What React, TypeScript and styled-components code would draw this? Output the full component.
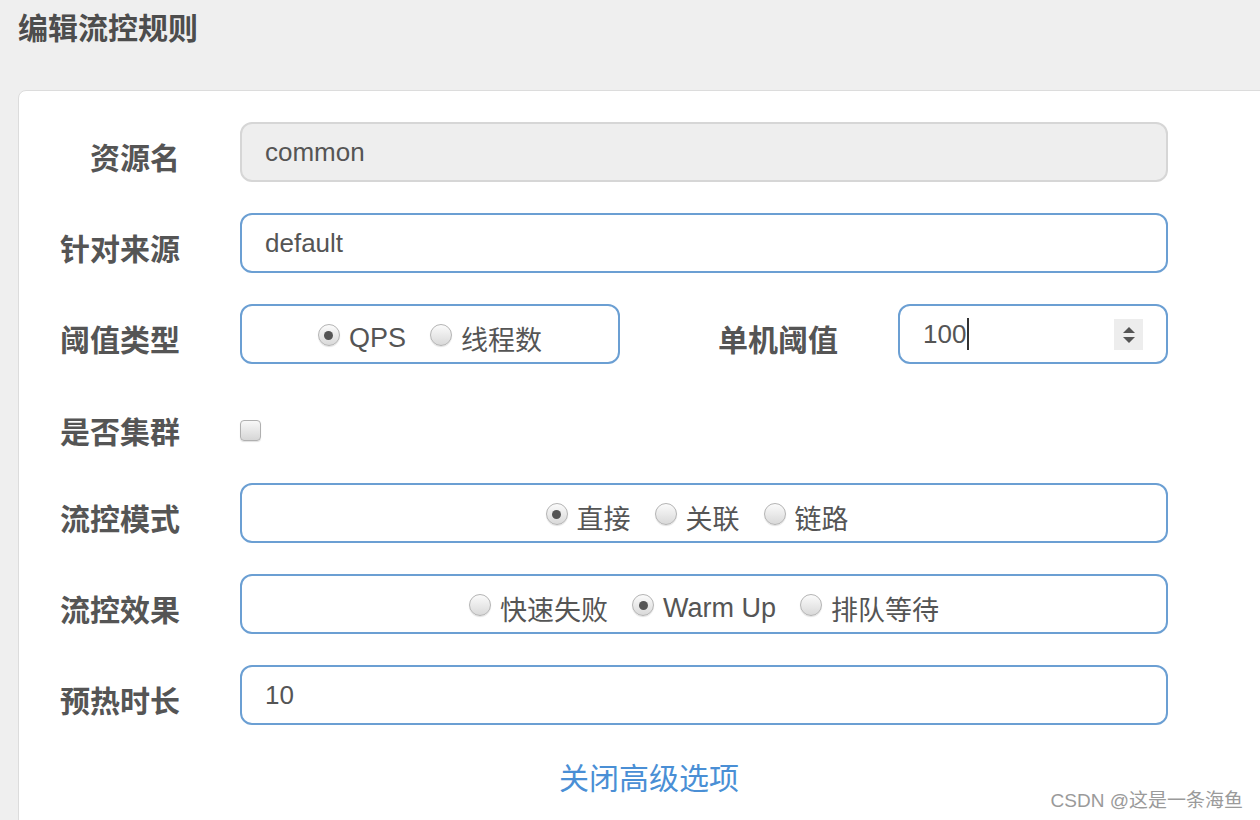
import React from "react";
import styled, { createGlobalStyle } from "styled-components";

const GlobalStyle = createGlobalStyle`
  html, body {
    margin: 0;
    padding: 0;
    background: #efefef;
    overflow: hidden;
  }
  body {
    width: 1260px;
    height: 820px;
    font-family: "Liberation Sans", "Noto Sans CJK SC", Arial, sans-serif;
  }
  * { box-sizing: border-box; }
`;

const Page = styled.div`
  position: relative;
  width: 1260px;
  height: 820px;
  padding-left: 18px;
  overflow: hidden;
`;

const Title = styled.h3`
  margin: 0;
  padding-top: 9px;
  height: 49px;
  line-height: 40px;
  font-size: 30px;
  font-weight: 700;
  color: #4d4d4d;
  font-family: "Liberation Sans", "Noto Sans CJK SC", sans-serif;
`;

const Card = styled.div`
  margin-top: 41px;
  width: 1262px;
  min-height: 760px;
  background: #ffffff;
  border: 1px solid #dcdcdc;
  border-radius: 8px;
  padding-top: 31px;
`;

const Form = styled.div`
  display: flex;
  flex-direction: column;
  gap: 31px;
`;

const Row = styled.div<{ $h?: number }>`
  display: flex;
  align-items: center;
  height: ${(p) => p.$h ?? 60}px;
`;

const Label = styled.label<{ $w?: number }>`
  flex: none;
  width: ${(p) => p.$w ?? 161}px;
  margin-right: 60px;
  text-align: right;
  padding-top: 7px;
  font-size: 30px;
  font-weight: 700;
  color: #555555;
  font-family: "Liberation Sans", "Noto Sans CJK SC", sans-serif;
`;

const Field = styled.div`
  display: flex;
  align-items: center;
  width: 928px;
  height: 100%;
`;

const Input = styled.div<{ $disabled?: boolean; $w?: number }>`
  position: relative;
  display: flex;
  align-items: center;
  width: ${(p) => (p.$w ? `${p.$w}px` : "100%")};
  height: 60px;
  padding-left: 23px;
  border: 2px solid ${(p) => (p.$disabled ? "#d6d6d6" : "#6b9fd3")};
  border-radius: 12px;
  background: ${(p) => (p.$disabled ? "#eeeeee" : "#ffffff")};
  font-size: 26px;
  color: #555555;
`;

const RadioBox = styled.div<{ $w?: number; $shift?: number }>`
  display: flex;
  align-items: center;
  justify-content: center;
  gap: 24px;
  width: ${(p) => (p.$w ? `${p.$w}px` : "100%")};
  height: 60px;
  padding-top: 8px;
  padding-right: ${(p) => p.$shift ?? 0}px;
  border: 2px solid #6b9fd3;
  border-radius: 12px;
  background: #ffffff;
`;

const RadioItem = styled.span`
  display: inline-flex;
  align-items: center;
  font-size: 27px;
  color: #555555;
  font-family: "Liberation Sans", "Noto Sans CJK SC", sans-serif;
`;

const RadioDot = styled.span<{ $checked?: boolean }>`
  position: relative;
  display: inline-block;
  width: 22px;
  height: 22px;
  margin-right: 9px;
  margin-top: -6px;
  border-radius: 50%;
  border: 1px solid #b4b4b4;
  background: linear-gradient(#fbfbfb, #d9d9d9);
  box-shadow: 0 1px 1px rgba(0, 0, 0, 0.12);
  &::after {
    content: "";
    display: ${(p) => (p.$checked ? "block" : "none")};
    position: absolute;
    left: 5.5px;
    top: 5.5px;
    width: 9px;
    height: 9px;
    border-radius: 50%;
    background: #555555;
  }
`;

const SideLabel = styled(Label)`
  flex: 1;
  width: auto;
  margin-right: 60px;
`;

const Caret = styled.span`
  display: inline-block;
  width: 2px;
  height: 32px;
  margin-left: 1px;
  background: #333333;
`;

const Spinner = styled.span`
  position: absolute;
  right: 23px;
  top: 13px;
  width: 29px;
  height: 31px;
  background: #ededed;
  display: flex;
  align-items: center;
  justify-content: center;
`;

const Checkbox = styled.span`
  display: inline-block;
  width: 21px;
  height: 21px;
  margin-top: 25px;
  border-radius: 4px;
  border: 1px solid #b0b0b0;
  background: linear-gradient(#f8f8f8, #d6d6d6);
  box-shadow: 0 1px 1px rgba(0, 0, 0, 0.12);
`;

const CheckLabel = styled(Label)`
  align-self: flex-start;
  padding-top: 13px;
`;

const CheckField = styled(Field)`
  align-items: flex-start;
`;

const ToggleLink = styled.a`
  display: block;
  margin-top: 34px;
  text-align: center;
  font-size: 30px;
  line-height: 40px;
  color: #4a8fd5;
  text-decoration: none;
  font-family: "Liberation Sans", "Noto Sans CJK SC", sans-serif;
`;

const Watermark = styled.div`
  position: absolute;
  right: 17px;
  bottom: 9px;
  font-size: 19px;
  line-height: 20px;
  color: #9a9a9a;
  text-shadow: 0 0 1px #ffffff;
  font-family: "Liberation Sans", "Noto Sans CJK SC", sans-serif;
`;

type Opt = { label: string; checked?: boolean };

const Radios: React.FC<{ options: Opt[]; width?: number; shift?: number }> = ({ options, width, shift }) => (
  <RadioBox $w={width} $shift={shift}>
    {options.map((o) => (
      <RadioItem key={o.label}>
        <RadioDot $checked={o.checked} />
        {o.label}
      </RadioItem>
    ))}
  </RadioBox>
);

export default function App() {
  return (
    <>
      <GlobalStyle />
      <Page>
        <Title>编辑流控规则</Title>
        <Card>
          <Form>
            <Row>
              <Label>资源名</Label>
              <Field>
                <Input $disabled>common</Input>
              </Field>
            </Row>
            <Row>
              <Label>针对来源</Label>
              <Field>
                <Input>default</Input>
              </Field>
            </Row>
            <Row>
              <Label>阈值类型</Label>
              <Field>
                <Radios width={380} options={[{ label: "QPS", checked: true }, { label: "线程数" }]} />
                <SideLabel>单机阈值</SideLabel>
                <Input $w={270}>
                  100
                  <Caret />
                  <Spinner>
                    <svg width="14" height="22" viewBox="0 0 14 22">
                      <path d="M7 3 L13 9 L1 9 Z" fill="#555" />
                      <path d="M1 13 L13 13 L7 19 Z" fill="#555" />
                    </svg>
                  </Spinner>
                </Input>
              </Field>
            </Row>
            <Row $h={57}>
              <CheckLabel>是否集群</CheckLabel>
              <CheckField>
                <Checkbox />
              </CheckField>
            </Row>
            <Row>
              <Label>流控模式</Label>
              <Field>
                <Radios
                  shift={14}
                  options={[{ label: "直接", checked: true }, { label: "关联" }, { label: "链路" }]}
                />
              </Field>
            </Row>
            <Row>
              <Label>流控效果</Label>
              <Field>
                <Radios
                  options={[{ label: "快速失败" }, { label: "Warm Up", checked: true }, { label: "排队等待" }]}
                />
              </Field>
            </Row>
            <Row>
              <Label>预热时长</Label>
              <Field>
                <Input>10</Input>
              </Field>
            </Row>
          </Form>
          <ToggleLink href="#">关闭高级选项</ToggleLink>
        </Card>
        <Watermark>CSDN @这是一条海鱼</Watermark>
      </Page>
    </>
  );
}
